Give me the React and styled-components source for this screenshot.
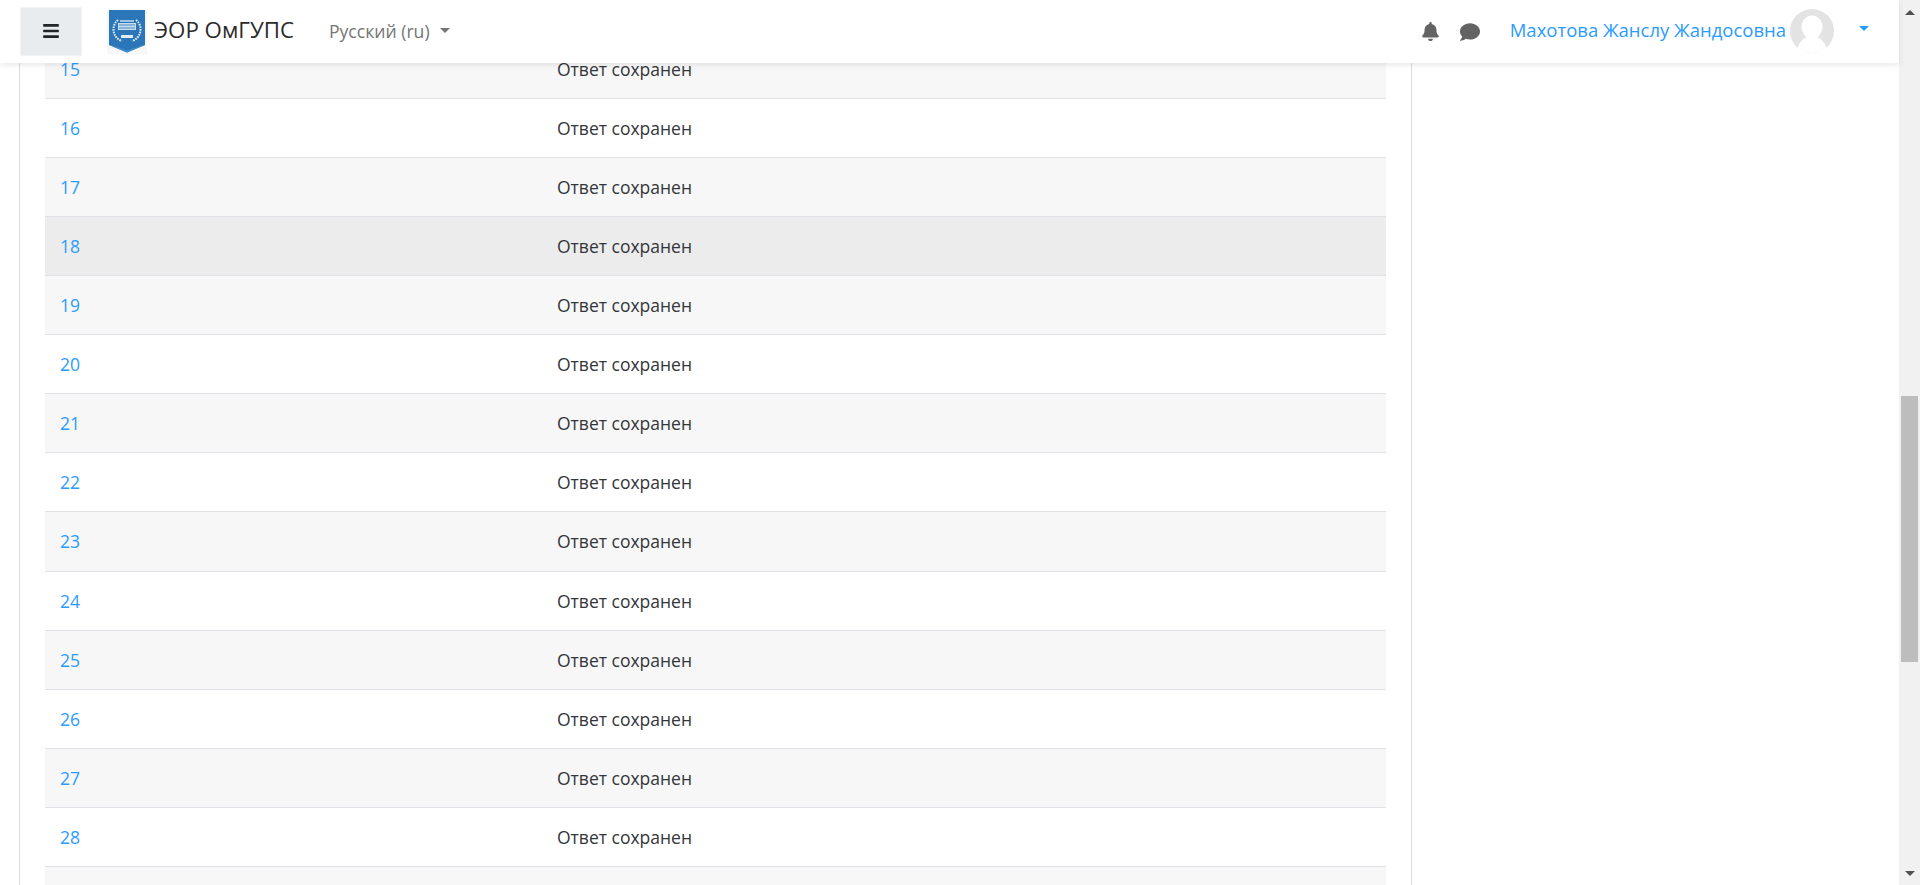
import React from 'react'
import styled, { createGlobalStyle } from 'styled-components'
import { FaBars, FaBell, FaComment } from 'react-icons/fa'

const GlobalStyle = createGlobalStyle`
  html, body {
    margin: 0;
    height: 100%;
    overflow: hidden;
    background: #fff;
    font-family: "Open Sans", "Noto Sans", sans-serif;
    font-size: 17.5px;
    color: #33363a;
  }
`

const Viewport = styled.div`
  display: flex;
  height: 885px;
  overflow: hidden;
`

const Page = styled.div`
  position: relative;
  flex: 1;
  min-width: 0;
  padding-left: 19px;
`

const Header = styled.header`
  position: absolute;
  top: 0;
  left: 0;
  right: 0;
  z-index: 2;
  height: 63px;
  display: flex;
  align-items: center;
  padding: 0 18px 0 20px;
  box-sizing: border-box;
  background: #fff;
  box-shadow: 0 2px 6px rgba(0, 0, 0, 0.09);
`

const MenuButton = styled.button`
  width: 62px;
  height: 49px;
  margin-top: -1px;
  padding: 0;
  display: flex;
  align-items: center;
  justify-content: center;
  border: 1px solid #f3f4f5;
  background: #e9ecef;
  color: #212529;
  font-size: 18px;
`

const Brand = styled.a`
  display: flex;
  align-items: center;
  margin-left: 25px;
  color: #2b2b2b;
  font-size: 22.3px;
  line-height: 27px;
`

const BrandName = styled.span`
  margin-left: 7px;
  margin-top: -4px;
`

const Caret = styled.span`
  display: inline-block;
  width: 0;
  height: 0;
  border-left: 5px solid transparent;
  border-right: 5px solid transparent;
  border-top: 5px solid ${p => p.$color};
`

const Language = styled.a`
  display: flex;
  align-items: center;
  gap: 10px;
  margin-left: 35px;
  margin-top: -2px;
  color: #757575;
  font-size: 17.6px;
  line-height: 22px;
`

const Icons = styled.div`
  display: flex;
  align-items: center;
  gap: 20px;
  margin-left: auto;
  color: #636363;
`

const UserLink = styled.a`
  margin-left: 30px;
  margin-top: -4px;
  color: #2b9bff;
  font-size: 18.5px;
  line-height: 23px;
  white-space: nowrap;
`

const UserCaret = styled.span`
  display: flex;
  margin-left: 25px;
  margin-right: 12px;
  margin-top: -6px;
`

const Avatar = styled.svg`
  display: block;
  margin-left: 4px;
  margin-top: -2px;
`

const Card = styled.main`
  width: 1393px;
  height: 885px;
  box-sizing: border-box;
  padding: 39.7px 25px 0;
  border-left: 1px solid #dcdcdc;
  border-right: 1px solid #dcdcdc;
  overflow: hidden;
`

const Row = styled.div`
  display: grid;
  grid-template-columns: 497px 1fr;
  height: 59.1px;
  box-sizing: border-box;
  align-items: center;
  padding: 0 15px;
  border-bottom: 1px solid #e0e0e6;
  background: ${p => (p.$hover ? '#ececec' : p.$striped ? '#f7f7f7' : '#fff')};
  line-height: 24px;
`

const NumberLink = styled.a`
  color: #2b9bff;
`

const Scrollbar = styled.aside`
  position: relative;
  width: 21px;
  flex-shrink: 0;
  box-sizing: border-box;
  padding: 0 2px;
  background: #f1f1f1;
  display: flex;
  flex-direction: column;
`

const ScrollArrow = styled.span`
  display: block;
  width: 0;
  height: 0;
  margin: 0 auto;
  border-left: 5px solid transparent;
  border-right: 5px solid transparent;
  ${p => (p.$down ? 'border-top: 5px solid #505050;' : 'border-bottom: 5px solid #505050;')}
`

const ArrowBox = styled.div`
  flex: ${p => (p.$down ? '1' : 'none')};
  display: flex;
  align-items: flex-end;
  justify-content: center;
  height: ${p => (p.$down ? 'auto' : '15px')};
  padding-bottom: ${p => (p.$down ? '9px' : '0')};
`

const Thumb = styled.div`
  height: 266px;
  margin-top: 381px;
  background: #bdbdbd;
`

const Logo = () => (
  <svg width="40" height="44" viewBox="0 0 40 44" style={{ display: 'block' }}>
    <rect width="40" height="44" fill="#f7f7f7" />
    <path d="M2 0H38V35L20 42.5L2 35Z" fill="#2a76b8" />
    <path d="M20 42.5L2 35H4L20 40.5L36 35H38Z" fill="#3f8dcd" />
    <g fill="none" stroke="#e9f1f8" strokeWidth="2" strokeDasharray="1.6 1">
      <path d="M11 10C4 15 5 28 15 31" />
      <path d="M29 10C36 15 35 28 25 31" />
    </g>
    <rect x="13" y="10" width="14" height="2" fill="#9fc3e2" />
    <rect x="11" y="13" width="18" height="7" fill="#c7dcee" />
    <path d="M12 15H28M12 18H28" stroke="#2a76b8" strokeWidth="0.8" />
    <rect x="14" y="25" width="12" height="3" fill="#dfeaf4" />
  </svg>
)

const UserPic = () => (
  <Avatar width="44" height="44" viewBox="0 0 44 44">
    <defs>
      <clipPath id="avatarClip">
        <circle cx="22" cy="22" r="22" />
      </clipPath>
    </defs>
    <circle cx="22" cy="22" r="22" fill="#e3e3e3" />
    <g clipPath="url(#avatarClip)" fill="#fff">
      <ellipse cx="22" cy="18" rx="10.5" ry="11.5" />
      <ellipse cx="22" cy="44" rx="15" ry="17" />
    </g>
  </Avatar>
)

// row 29 is only a sliver at the bottom of the window, its text is below the fold
const numbers = Array.from({ length: 15 }, (_, i) => 15 + i)

export default function App() {
  return (
    <Viewport>
      <GlobalStyle />
      <Page>
        <Header>
          <MenuButton><FaBars /></MenuButton>
          <Brand>
            <Logo />
            <BrandName>ЭОР ОмГУПС</BrandName>
          </Brand>
          <Language>
            Русский (ru)
            <Caret $color="#757575" />
          </Language>
          <Icons>
            <FaBell size={19} />
            <FaComment size={20} />
          </Icons>
          <UserLink>Махотова Жанслу Жандосовна</UserLink>
          <UserPic />
          <UserCaret><Caret $color="#2b9bff" /></UserCaret>
        </Header>
        <Card>
          {numbers.map(n => (
            <Row key={n} $striped={n % 2 === 1} $hover={n === 18}>
              {n < 29 && <NumberLink>{n}</NumberLink>}
              {n < 29 && <span>Ответ сохранен</span>}
            </Row>
          ))}
        </Card>
      </Page>
      <Scrollbar>
        <ArrowBox><ScrollArrow /></ArrowBox>
        <Thumb />
        <ArrowBox $down><ScrollArrow $down /></ArrowBox>
      </Scrollbar>
    </Viewport>
  )
}
